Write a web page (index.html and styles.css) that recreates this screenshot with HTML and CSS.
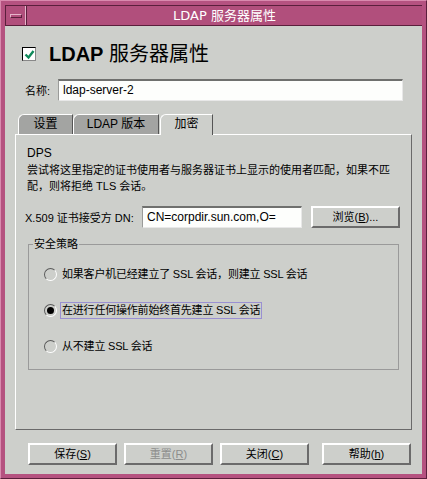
FILE: index.html
```html
<!DOCTYPE html>
<html>
<head>
<meta charset="utf-8">
<link rel="stylesheet" href="styles.css">
</head>
<body>
<div class="window">
  <div class="titlebar">
    <div class="menubtn"><span class="menubar"></span></div>
    <div class="title">LDAP 服务器属性</div>
  </div>
  <div class="content">
    <div class="header">
      <span class="checkbox"><svg width="11" height="11" viewBox="0 0 11 11"><path d="M1.5 5.5 L4.5 8.5 L9.5 2" fill="none" stroke="#0f8a5a" stroke-width="2.4"/></svg></span>
      <span class="htext"><b>LDAP</b> 服务器属性</span>
    </div>
    <div class="namerow">
      <span class="label">名称:</span>
      <div class="field namefield">ldap-server-2</div>
    </div>
    <div class="tabs">
      <div class="tab t1">设置</div>
      <div class="tab t2">LDAP 版本</div>
      <div class="tab t3 active">加密</div>
    </div>
    <div class="panel">
      <div class="desc">
        <div>DPS</div>
        <div>尝试将这里指定的证书使用者与服务器证书上显示的使用者匹配，如果不匹</div>
        <div>配，则将拒绝 TLS 会话。</div>
      </div>
      <div class="x509row">
        <span class="xlabel">X.509 证书接受方 DN:</span>
        <div class="field dnfield">CN=corpdir.sun.com,O=</div>
        <div class="btn browse">浏览(<u>B</u>)...</div>
      </div>
      <div class="group">
        <div class="legend">安全策略</div>
        <div class="radio r1"><span class="rb"></span><span class="rt">如果客户机已经建立了 SSL 会话，则建立 SSL 会话</span></div>
        <div class="radio r2"><span class="rb on"></span><span class="rt focus">在进行任何操作前始终首先建立 SSL 会话</span></div>
        <div class="radio r3"><span class="rb"></span><span class="rt">从不建立 SSL 会话</span></div>
      </div>
    </div>
    <div class="buttons">
      <div class="btn b1">保存(<u>S</u>)</div>
      <div class="btn b2 disabled">重置(<u>R</u>)</div>
      <div class="btn b3">关闭(<u>C</u>)</div>
      <div class="btn b4">帮助(<u>h</u>)</div>
    </div>
  </div>
</div>
</body>
</html>
```
FILE: styles.css
```css
* { box-sizing: border-box; }
html, body { margin: 0; padding: 0; }
body {
  width: 427px; height: 479px; overflow: hidden;
  font-family: "Liberation Sans", "Noto Sans CJK SC", sans-serif;
  font-size: 11px; color: #000;
}
.window {
  width: 427px; height: 479px;
  background: #b55280;
  border: 1px solid #d98aae;
  border-right-color: #5b1f3c;
  border-bottom-color: #5b1f3c;
  padding: 4px 4px 4px 4px;
  display: flex; flex-direction: column;
}
.titlebar {
  height: 21px;
  display: flex;
  border-top: 1px solid #5b1f3c;
  border-left: 1px solid #5b1f3c;
  border-bottom: 1px solid #5b1f3c;
  background: #b14f7c;
}
.menubtn {
  width: 20px; border-right: 1px solid #e6b4ca;
  display: flex; align-items: center; justify-content: center;
}
.menubar {
  width: 12px; height: 4px; border: 1px solid #e6b4ca; border-right-color: #5b1f3c; border-bottom-color: #5b1f3c;
}
.title {
  flex: 1; text-align: center; color: #fff; font-size: 13px; line-height: 19px;
  font-family: "DejaVu Sans", "Noto Sans CJK SC", sans-serif;
  border-left: 1px solid #5b1f3c;
}
.content {
  flex: 1; background: #cdcfcb;
  padding: 0 10px;
  display: flex; flex-direction: column;
  white-space: nowrap;
}
.header {
  margin-top: 19px; height: 18px;
  display: flex; align-items: center;
  padding-left: 7px;
}
.checkbox {
  width: 14px; height: 14px; background: #fff;
  border: 1px solid #000; border-right-color: #888; border-bottom-color: #888;
  display: flex; align-items: center; justify-content: center;
}
.htext { margin-left: 13px; font-size: 20px; line-height: 18px; }
.htext b { font-family: "Liberation Sans", sans-serif; font-weight: bold; }
.namerow {
  margin-top: 16px; height: 22px;
  display: flex; align-items: center;
}
.label { width: 43px; padding-left: 10px; }
.field {
  background: #fdfefc; height: 22px;
  border-top: 2px solid #6f706e; border-left: 1px solid #9a9b99;
  border-right: 1px solid #e8e8e8; border-bottom: 1px solid #e8e8e8;
  padding-left: 4px; line-height: 19px; font-size: 12px;
  overflow: hidden;
}
.namefield { width: 345px; }
.tabs {
  margin-top: 12px; height: 21px;
  display: flex; align-items: flex-end; padding-left: 3px;
}
.tab {
  height: 20px; background: #a3a4a2;
  border: 1px solid #fff; border-right: 1px solid #555; border-bottom: none;
  border-top-left-radius: 6px;
  text-align: center; line-height: 18px; font-size: 12px;
}
.t1 { width: 55px; }
.t2 { width: 86px; }
.t3 { width: 53px; margin-left: 1px; }
.tab.active { background: #cdcfcb; height: 21px; border-bottom: none; position: relative; z-index: 1; margin-bottom: -1px; }
.panel {
  height: 296px;
  border: 1px solid #fff; border-right-color: #6a6a6a; border-bottom-color: #6a6a6a;
  padding: 10px 0 0 11px;
  display: flex; flex-direction: column;
}
.desc { line-height: 16.5px; font-size: 11px; }
.desc div:first-child { font-size: 12px; }
.x509row {
  margin-top: 11px; height: 22px;
  display: flex; align-items: center; margin-left: -2px;
}
.xlabel { width: 117px; font-size: 11px; }
.dnfield { width: 160px; }
.btn {
  height: 22px; width: 89px;
  border: 2px solid; border-color: #fff #6b6b6b #6b6b6b #fff;
  text-align: center; line-height: 18px; font-size: 11px;
  background: #cdcfcb;
}
.browse { margin-left: 9px; }
.group {
  position: relative;
  margin-top: 16px; margin-left: 1px; width: 371px; height: 126px;
  border: 1px solid #9a9a9a;
  padding-top: 12px;
}
.legend {
  position: absolute; top: -8px; left: 4px; background: #cdcfcb; padding: 0 1px;
  line-height: 14px;
}
.radio { height: 36px; display: flex; align-items: center; padding-left: 15px; }
.rb {
  width: 13px; height: 13px; border-radius: 50%; flex: none;
  border: 1px solid #5a5a5a; border-right-color: #fff; border-bottom-color: #fff;
  background: #cdcfcb; position: relative;
}
.rb.on::after {
  content: ""; position: absolute; left: 2px; top: 2px; width: 7px; height: 7px; border-radius: 50%; background: #000;
}
.rt { margin-left: 3px; padding: 0 1px; line-height: 15px; border: 1px solid transparent; letter-spacing: -0.2px; }
.rt.focus { border-color: #9a90d2; }
.buttons {
  margin-top: 13px; height: 22px;
  display: flex;
}
.b1 { margin-left: 13px; }
.b2 { margin-left: 7px; color: #8c8d8b; }
.b3 { margin-left: 7px; }
.b4 { margin-left: 13px; }
u { text-decoration: underline; }
```
